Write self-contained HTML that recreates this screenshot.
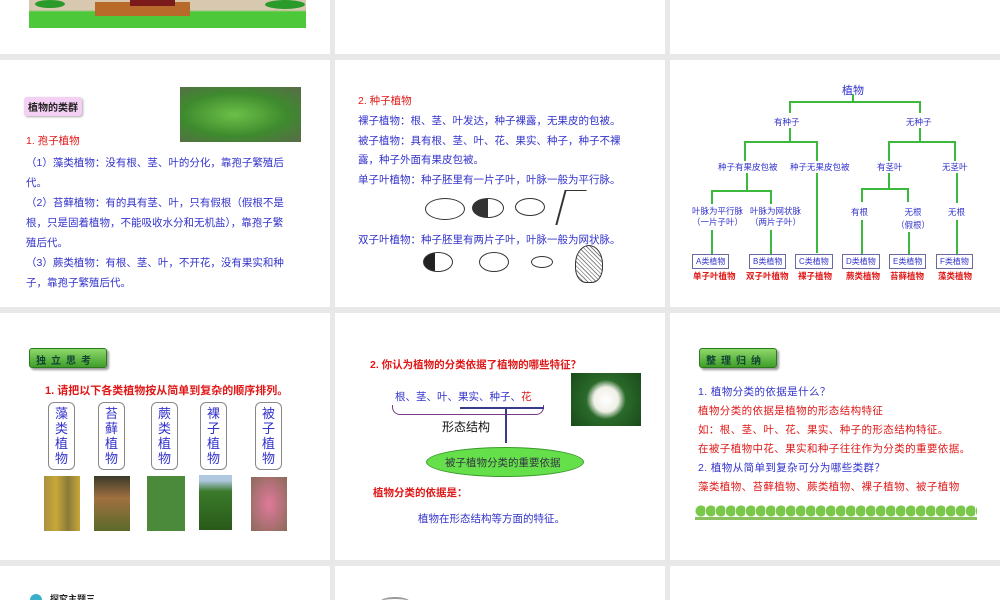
<!DOCTYPE html>
<html><head><meta charset="utf-8"><style>
*{margin:0;padding:0;box-sizing:border-box}
body{width:1000px;height:600px;background:#e8e8e8;position:relative;overflow:hidden;font-family:"Liberation Sans","Noto Sans CJK SC",sans-serif}
.s{position:absolute;background:#fff;overflow:hidden}
.a{position:absolute;white-space:nowrap}
.b{color:#3333cc}.r{color:#e01818}
.t{font-size:10.5px}
.tag{position:absolute;background:linear-gradient(#8fd86a,#3f9e2a);border:1px solid #2d7a1f;border-radius:3px;box-shadow:2px 2px 2px #999;font-size:10px;color:#143;letter-spacing:5px;padding:3px 6px;font-weight:bold}
.vb{position:absolute;border:1px solid #888;border-radius:6px;width:27px;font-size:13px;line-height:15px;color:#3333cc;text-align:center;padding:3px 0}
.ln{position:absolute;background:#3cb83c}
.bx{position:absolute;border:1px solid #6a6aa0;font-size:8px;color:#3333cc;padding:1px 3px;background:#fff}
.pic{position:absolute}
</style></head><body>
<!-- row 1 -->
<div class="s" style="left:0;top:0;width:330px;height:54px">
<div class="pic" style="left:29px;top:0;width:277px;height:28px;background:linear-gradient(#d8c8b0 0,#d8c8b0 10px,#4cc83a 12px,#4cc83a)"></div>
<div class="pic" style="left:95px;top:2px;width:95px;height:14px;background:#b86a2a"></div>
<div class="pic" style="left:130px;top:0;width:45px;height:6px;background:#7a1a1a"></div>
<div class="pic" style="left:35px;top:0;width:30px;height:8px;background:#2a9a2a;border-radius:50%"></div>
<div class="pic" style="left:265px;top:0;width:40px;height:9px;background:#2a9a2a;border-radius:50%"></div>
</div>
<div class="s" style="left:335px;top:0;width:330px;height:54px"></div>
<div class="s" style="left:670px;top:0;width:330px;height:54px"></div>
<!-- row 2 -->
<div class="s" style="left:0;top:60px;width:330px;height:247px">
<div class="a" style="left:24px;top:37px;background:#f4d0f4;border-radius:3px;box-shadow:1px 1px 2px #aaa;font-size:10px;font-weight:bold;padding:2px 4px;color:#222">植物的类群</div>
<div class="pic" style="left:180px;top:27px;width:121px;height:55px;background:radial-gradient(ellipse at 45% 50%,#6cc048,#3e8a2e 55%,#5a6a4a)"></div>
<div class="a r t" style="left:26px;top:73px">1. 孢子植物</div>
<div class="a b t" style="left:26px;top:93px;line-height:20px">（1）藻类植物：没有根、茎、叶的分化，靠孢子繁殖后<br>代。<br>（2）苔藓植物：有的具有茎、叶，只有假根（假根不是<br>根，只是固着植物，不能吸收水分和无机盐），靠孢子繁<br>殖后代。<br>（3）蕨类植物：有根、茎、叶，不开花，没有果实和种<br>子，靠孢子繁殖后代。</div>
</div>
<div class="s" style="left:335px;top:60px;width:330px;height:247px">
<div class="a r t" style="left:23px;top:33px">2. 种子植物</div>
<div class="a b t" style="left:23px;top:52px;line-height:19.5px">裸子植物：根、茎、叶发达，种子裸露，无果皮的包被。<br>被子植物：具有根、茎、叶、花、果实、种子，种子不裸<br>露，种子外面有果皮包被。<br>单子叶植物：种子胚里有一片子叶，叶脉一般为平行脉。</div>
<div class="pic" style="left:90px;top:138px;width:40px;height:22px;border:1px solid #333;border-radius:50%"></div>
<div class="pic" style="left:137px;top:138px;width:32px;height:20px;border:1px solid #333;border-radius:50%;background:linear-gradient(90deg,#333 50%,#fff 50%)"></div>
<div class="pic" style="left:180px;top:138px;width:30px;height:18px;border:1px solid #333;border-radius:50%"></div>
<div class="pic" style="left:225px;top:130px;width:22px;height:35px;border-left:2px solid #333;border-top:1px solid #333;transform:skewX(-15deg)"></div>
<div class="a b t" style="left:23px;top:172px">双子叶植物：种子胚里有两片子叶，叶脉一般为网状脉。</div>
<div class="pic" style="left:88px;top:192px;width:30px;height:20px;border:1px solid #333;border-radius:50%;background:linear-gradient(90deg,#222 40%,#fff 40%)"></div>
<div class="pic" style="left:144px;top:192px;width:30px;height:20px;border:1px solid #333;border-radius:50%"></div>
<div class="pic" style="left:196px;top:196px;width:22px;height:12px;border:1px solid #333;border-radius:50%"></div>
<div class="pic" style="left:240px;top:185px;width:28px;height:38px;border:1px solid #333;border-radius:50% 50% 40% 40%;background:repeating-linear-gradient(45deg,#fff 0 2px,#888 2px 3px)"></div>
</div>
<div class="s" style="left:670px;top:60px;width:330px;height:247px">
<div class="a b" style="left:172px;top:22px;font-size:11px">植物</div>
<div class="ln" style="left:182px;top:34px;width:2px;height:8px"></div>
<div class="ln" style="left:119px;top:41px;width:131px;height:2px"></div>
<div class="ln" style="left:119px;top:41px;width:2px;height:12px"></div>
<div class="ln" style="left:249px;top:41px;width:2px;height:12px"></div>
<div class="a b" style="left:104px;top:56px;font-size:8.5px">有种子</div>
<div class="a b" style="left:236px;top:56px;font-size:8.5px">无种子</div>
<div class="ln" style="left:119px;top:68px;width:2px;height:14px"></div>
<div class="ln" style="left:74px;top:81px;width:74px;height:2px"></div>
<div class="ln" style="left:74px;top:81px;width:2px;height:20px"></div>
<div class="ln" style="left:146px;top:81px;width:2px;height:20px"></div>
<div class="ln" style="left:249px;top:68px;width:2px;height:14px"></div>
<div class="ln" style="left:218px;top:81px;width:68px;height:2px"></div>
<div class="ln" style="left:218px;top:81px;width:2px;height:20px"></div>
<div class="ln" style="left:284px;top:81px;width:2px;height:20px"></div>
<div class="a b" style="left:48px;top:101px;font-size:8.5px">种子有果皮包被</div>
<div class="a b" style="left:120px;top:101px;font-size:8.5px">种子无果皮包被</div>
<div class="a b" style="left:207px;top:101px;font-size:8.5px">有茎叶</div>
<div class="a b" style="left:272px;top:101px;font-size:8.5px">无茎叶</div>
<div class="ln" style="left:76px;top:113px;width:2px;height:18px"></div>
<div class="ln" style="left:41px;top:130px;width:61px;height:2px"></div>
<div class="ln" style="left:41px;top:130px;width:2px;height:14px"></div>
<div class="ln" style="left:100px;top:130px;width:2px;height:14px"></div>
<div class="ln" style="left:146px;top:113px;width:2px;height:80px"></div>
<div class="ln" style="left:218px;top:113px;width:2px;height:16px"></div>
<div class="ln" style="left:191px;top:128px;width:48px;height:2px"></div>
<div class="ln" style="left:191px;top:128px;width:2px;height:14px"></div>
<div class="ln" style="left:237px;top:128px;width:2px;height:14px"></div>
<div class="ln" style="left:286px;top:113px;width:2px;height:30px"></div>
<div class="a b" style="left:22px;top:146px;font-size:8.5px;line-height:11px;text-align:center">叶脉为平行脉<br>（一片子叶）</div>
<div class="a b" style="left:80px;top:146px;font-size:8.5px;line-height:11px;text-align:center">叶脉为网状脉<br>（两片子叶）</div>
<div class="a b" style="left:181px;top:146px;font-size:8.5px">有根</div>
<div class="a b" style="left:226px;top:146px;font-size:8.5px;line-height:13px;text-align:center">无根<br>（假根）</div>
<div class="a b" style="left:278px;top:146px;font-size:8.5px">无根</div>
<div class="ln" style="left:41px;top:170px;width:2px;height:24px"></div>
<div class="ln" style="left:100px;top:170px;width:2px;height:24px"></div>
<div class="ln" style="left:191px;top:160px;width:2px;height:34px"></div>
<div class="ln" style="left:238px;top:172px;width:2px;height:22px"></div>
<div class="ln" style="left:286px;top:160px;width:2px;height:34px"></div>
<div class="bx" style="left:22px;top:194px">A类植物</div>
<div class="bx" style="left:79px;top:194px">B类植物</div>
<div class="bx" style="left:125px;top:194px">C类植物</div>
<div class="bx" style="left:172px;top:194px">D类植物</div>
<div class="bx" style="left:219px;top:194px">E类植物</div>
<div class="bx" style="left:266px;top:194px">F类植物</div>
<div class="a r" style="left:23px;top:210px;font-size:8.5px;font-weight:bold">单子叶植物</div>
<div class="a r" style="left:76px;top:210px;font-size:8.5px;font-weight:bold">双子叶植物</div>
<div class="a r" style="left:128px;top:210px;font-size:8.5px;font-weight:bold">裸子植物</div>
<div class="a r" style="left:176px;top:210px;font-size:8.5px;font-weight:bold">蕨类植物</div>
<div class="a r" style="left:220px;top:210px;font-size:8.5px;font-weight:bold">苔藓植物</div>
<div class="a r" style="left:268px;top:210px;font-size:8.5px;font-weight:bold">藻类植物</div>
</div>
<!-- row 3 -->
<div class="s" style="left:0;top:313px;width:330px;height:247px">
<div class="tag" style="left:29px;top:35px;width:78px;height:20px">独立思考</div>
<div class="a r" style="left:45px;top:69px;font-weight:bold;font-size:11px">1. 请把以下各类植物按从简单到复杂的顺序排列。</div>
<div class="vb" style="left:48px;top:89px">藻类植物</div>
<div class="vb" style="left:98px;top:89px">苔藓植物</div>
<div class="vb" style="left:151px;top:89px">蕨类植物</div>
<div class="vb" style="left:200px;top:89px">裸子植物</div>
<div class="vb" style="left:255px;top:89px">被子植物</div>
<div class="pic" style="left:44px;top:163px;width:36px;height:55px;background:linear-gradient(90deg,#a89040,#c8a838,#8a7a3a,#c8a838)"></div>
<div class="pic" style="left:94px;top:163px;width:36px;height:55px;background:linear-gradient(#3a3a2a,#a07040 40%,#5a6a2a)"></div>
<div class="pic" style="left:147px;top:163px;width:38px;height:55px;background:#4a8a3a"></div>
<div class="pic" style="left:199px;top:162px;width:33px;height:55px;background:linear-gradient(#b0c8e0 10%,#3a7a2a 30%,#2a5a1a)"></div>
<div class="pic" style="left:251px;top:164px;width:36px;height:54px;background:radial-gradient(#e07a9a,#8a6a5a)"></div>
</div>
<div class="s" style="left:335px;top:313px;width:330px;height:247px">
<div class="a r t" style="left:35px;top:44px;font-weight:bold">2. 你认为植物的分类依据了植物的哪些特征？</div>
<div class="pic" style="left:236px;top:60px;width:70px;height:53px;background:radial-gradient(circle at 50% 50%,#fff 0,#f0f0e8 28%,#2a6a2a 45%,#1a4a1a)"></div>
<div class="a b t" style="left:60px;top:76px">根、茎、叶、果实、种子、<span class="r">花</span></div>
<div class="pic" style="left:57px;top:92px;width:152px;height:10px;border:1.5px solid #7a3a8a;border-top:none;border-radius:0 0 8px 8px"></div>
<div class="pic" style="left:125px;top:94px;width:84px;height:2px;background:#3a3a8a"></div>
<div class="pic" style="left:170px;top:95px;width:1.5px;height:35px;background:#3a3a8a"></div>
<div class="a" style="left:107px;top:105px;font-size:12px;color:#111">形态结构</div>
<div class="pic" style="left:91px;top:134px;width:158px;height:30px;border-radius:50%;background:#66e04a;border:1px solid #3a9a2a"></div>
<div class="a t" style="left:110px;top:142px;color:#334">被子植物分类的重要依据</div>
<div class="a r t" style="left:38px;top:172px;font-weight:bold">植物分类的依据是：</div>
<div class="a b t" style="left:83px;top:198px">植物在形态结构等方面的特征。</div>
</div>
<div class="s" style="left:670px;top:313px;width:330px;height:247px">
<div class="tag" style="left:29px;top:35px;width:78px;height:20px">整理归纳</div>
<div class="a" style="left:28px;top:70px;line-height:19px;font-size:10.5px;letter-spacing:0.4px">
<div class="b">1. 植物分类的依据是什么？</div>
<div class="r">植物分类的依据是植物的形态结构特征</div>
<div class="r">如：根、茎、叶、花、果实、种子的形态结构特征。</div>
<div class="r">在被子植物中花、果实和种子往往作为分类的重要依据。</div>
<div class="b">2. 植物从简单到复杂可分为哪些类群？</div>
<div class="r">藻类植物、苔藓植物、蕨类植物、裸子植物、被子植物</div></div>
<div class="pic" style="left:25px;top:192px;width:282px;height:15px;background:radial-gradient(circle at 6px 6px,#7ac84a 5px,transparent 6px) 0 0/10px 15px repeat-x"></div>
<div class="pic" style="left:25px;top:204px;width:282px;height:3px;background:#8ac060"></div>
</div>
<!-- row 4 -->
<div class="s" style="left:0;top:566px;width:330px;height:34px">
<div class="pic" style="left:30px;top:28px;width:12px;height:12px;border-radius:50%;background:#3ab0c8"></div>
<div class="a" style="left:50px;top:26px;font-size:9px;font-weight:bold;color:#222">探究主题三</div>
</div>
<div class="s" style="left:335px;top:566px;width:330px;height:34px">
<div class="pic" style="left:45px;top:31px;width:30px;height:10px;border-radius:50%;border-top:2px solid #999"></div>
</div>
<div class="s" style="left:670px;top:566px;width:330px;height:34px"></div>
</body></html>
